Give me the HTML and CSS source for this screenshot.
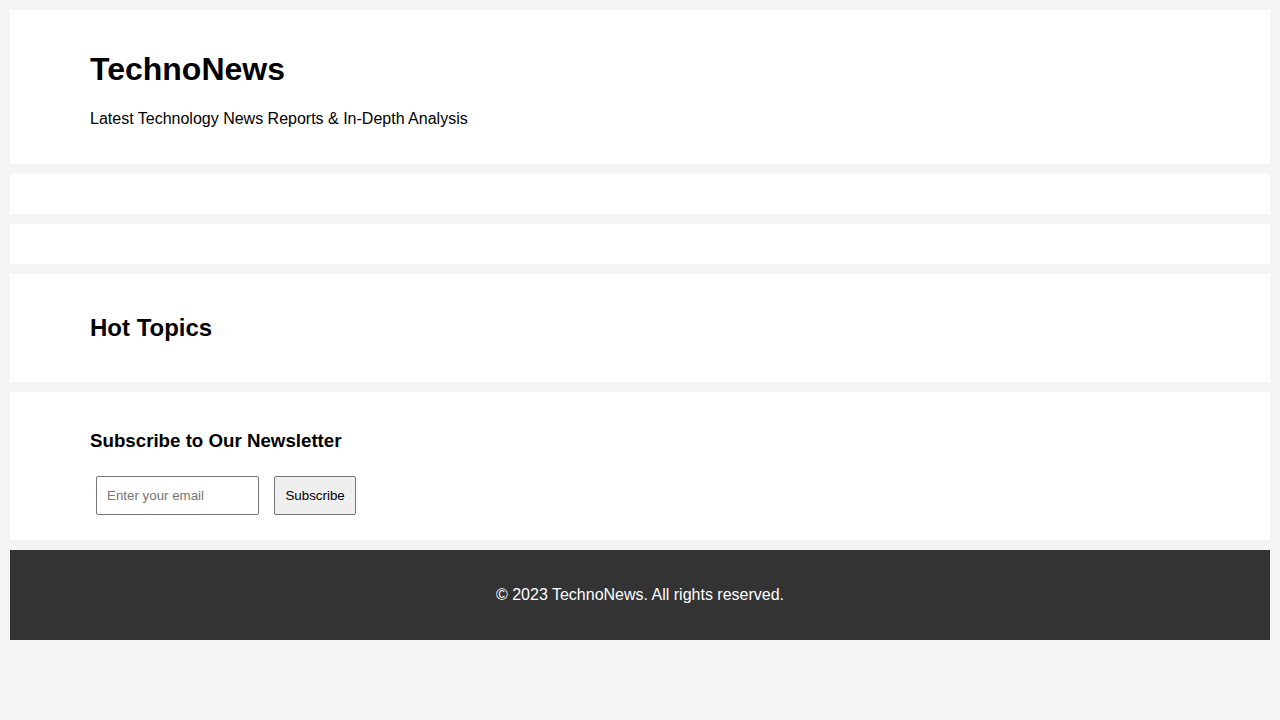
FILE: index.html
```html
<!DOCTYPE html>
<html lang="en">
<head>
<meta charset="utf-8">
<title>TechnoNews</title>
<link rel="stylesheet" href="styles.css">
</head>
<body>
<header class="block">
  <h1>TechnoNews</h1>
  <p>Latest Technology News Reports &amp; In-Depth Analysis</p>
</header>
<nav class="block"></nav>
<section class="block"></section>
<section class="block">
  <h2>Hot Topics</h2>
</section>
<section class="block">
  <h3>Subscribe to Our Newsletter</h3>
  <form class="subscribe">
    <input type="email" class="email" placeholder="Enter your email">
    <button type="button" class="btn">Subscribe</button>
  </form>
</section>
<footer class="footer">
  <p>© 2023 TechnoNews. All rights reserved.</p>
</footer>
</body>
</html>
```
FILE: styles.css
```css
html, body {
  margin: 0;
  padding: 0;
}
body {
  background: #f4f4f4;
  font-family: "Liberation Sans", Arial, sans-serif;
  color: #000;
}
.block {
  background: #fff;
  margin: 10px;
  padding: 20px 80px;
}
.subscribe {
  margin: 0;
}
.email,
.btn {
  font-family: "Liberation Sans", Arial, sans-serif;
  font-size: 13.333px;
  padding: 11px 10px;
  margin: 5px 5px 5px 6px;
  vertical-align: middle;
}
.email {
  width: 141px;
  border: 1px solid #767676;
  border-radius: 2px;
}
.btn {
  background: #efefef;
  border: 1px solid #767676;
  border-radius: 2px;
  color: #000;
}
.footer {
  background: #333;
  color: #fff;
  margin: 10px;
  padding: 20px;
  text-align: center;
}
```
